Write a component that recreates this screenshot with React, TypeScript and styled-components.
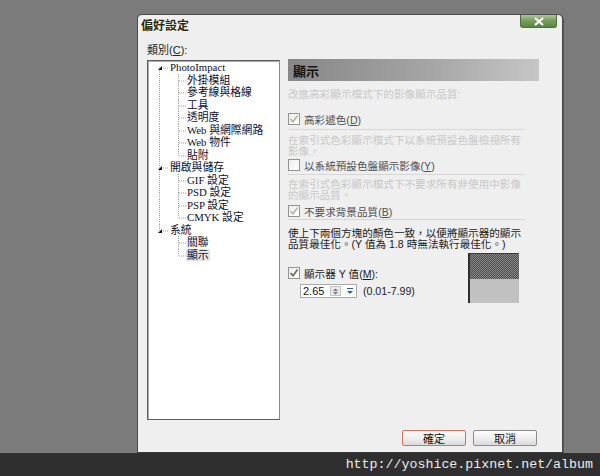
import React from 'react';
import styled, { createGlobalStyle } from 'styled-components';

const GlobalStyle = createGlobalStyle`
  html, body {
    margin: 0;
    padding: 0;
    background: #7b7b7b;
  }
  body {
    font-family: "Liberation Sans", "Noto Sans CJK TC", sans-serif;
  }
`;

const Screen = styled.div`
  width: 600px;
  height: 476px;
  display: flex;
  flex-direction: column;
  background: #7b7b7b;
  overflow: hidden;
`;

const Desktop = styled.div`
  height: 453px;
  box-sizing: border-box;
  padding: 14px 0 0 137px;
  display: flex;
`;

const Dialog = styled.div`
  width: 426px;
  height: 439px;
  box-sizing: border-box;
  border: 1px solid #4c4c4c;
  border-bottom-color: #3a3a3a;
  border-radius: 5px 5px 0 0;
  background: #efefef;
  display: flex;
  flex-direction: column;
  box-shadow: 1px 1px 0 #555;
`;

const TitleBar = styled.div`
  height: 25px;
  display: flex;
  justify-content: space-between;
  align-items: flex-start;
`;

const Title = styled.div`
  padding: 4px 0 0 3px;
  font-size: 12px;
  line-height: 14px;
  font-weight: bold;
  color: #2b2a0e;
  text-shadow: 0 0 2px #fff;
`;

const CloseButton = styled.div`
  width: 37px;
  height: 13px;
  margin-right: 5px;
  box-sizing: border-box;
  border: 1px solid #4d6e3c;
  border-top: none;
  border-radius: 0 0 3px 3px;
  background: linear-gradient(#a9c891, #78a060 45%, #5d8449);
  display: flex;
  align-items: center;
  justify-content: center;
`;

const Content = styled.div`
  display: flex;
  gap: 8px;
  padding-left: 9px;
`;

const LeftColumn = styled.div`
  width: 133px;
  display: flex;
  flex-direction: column;
`;

const FieldLabel = styled.div`
  padding-top: 3px;
  margin-bottom: 2px;
  font-size: 11px;
  line-height: 15px;
  color: #222;
`;

const TreeBox = styled.div`
  height: 360px;
  box-sizing: border-box;
  border: 1px solid #5e5e5e;
  border-right-color: #8a8a8a;
  box-shadow: inset 1px 1px 0 #a8a8a8;
  background: #fff;
  display: flex;
  flex-direction: column;
`;

const TreeRow = styled.div`
  height: 12.5px;
  display: flex;
  align-items: center;
  font-family: "Liberation Serif", "Noto Sans CJK TC", serif;
  font-size: 10.8px;
  line-height: 12.5px;
  color: #0e0e2c;
  white-space: nowrap;
`;

const TreeText = styled.span<{ $selected?: boolean }>`
  padding: 0 1px;
  margin-left: -1px;
  background: ${p => (p.$selected ? '#e4e4e4' : 'transparent')};
`;

const RightPanel = styled.div`
  width: 251px;
  margin-top: 19px;
  display: flex;
  flex-direction: column;
`;

const PanelHeader = styled.div`
  height: 22px;
  box-sizing: border-box;
  padding-left: 5px;
  display: flex;
  align-items: center;
  background: linear-gradient(90deg, #878787, #a4a4a4 55%, #c6c6c6);
  font-size: 13px;
  font-weight: bold;
  color: #111;
`;

const Para = styled.div<{ $disabled?: boolean; $mt: number }>`
  margin-top: ${p => p.$mt}px;
  font-size: 10.6px;
  line-height: 11px;
  color: ${p => (p.$disabled ? '#c8c8c8' : '#1a1a1a')};
  white-space: nowrap;
`;

const CheckRow = styled.div<{ $mt: number; $dim?: boolean }>`
  margin-top: ${p => p.$mt}px;
  height: 14px;
  display: flex;
  align-items: center;
  gap: 4px;
  font-size: 10.6px;
  color: ${p => (p.$dim ? '#505050' : '#1a1a1a')};
  white-space: nowrap;
`;

const Box = styled.div`
  width: 12px;
  height: 12px;
  box-sizing: border-box;
  border: 1px solid #939393;
  background: linear-gradient(135deg, #ececec, #fff);
  display: flex;
  align-items: center;
  justify-content: center;
`;

const Separator = styled.div<{ $mt: number }>`
  margin-top: ${p => p.$mt}px;
  width: 237px;
  height: 1px;
  background: #d6d6d6;
`;

const GammaRow = styled.div`
  margin-top: 3px;
  display: flex;
  justify-content: space-between;
  padding-right: 20px;
`;

const GammaControls = styled.div`
  padding-top: 13px;
  display: flex;
  flex-direction: column;
`;

const SpinLine = styled.div`
  margin-top: 4px;
  margin-left: 12px;
  display: flex;
  align-items: center;
  gap: 6px;
  font-size: 10.6px;
  color: #222;
`;

const SpinBox = styled.div`
  width: 57px;
  height: 14px;
  box-sizing: border-box;
  border: 1px solid #ababab;
  background: #fff;
  display: flex;
  align-items: center;
`;

const SpinValue = styled.span`
  width: 27px;
  padding-left: 2px;
  font-size: 11px;
  color: #111;
`;

const SpinButton = styled.div`
  width: 11px;
  height: 10px;
  box-sizing: border-box;
  border: 1px solid #c4c4c4;
  background: #e8e8e8;
  display: flex;
  align-items: center;
  justify-content: center;
`;

const DropButton = styled.div`
  width: 12px;
  height: 12px;
  margin-left: 3px;
  display: flex;
  align-items: center;
  justify-content: center;
`;

const GammaBox = styled.div`
  width: 51px;
  height: 50px;
  box-sizing: border-box;
  border-left: 2px solid #2e2e2e;
  border-top: 1px solid #3a3a3a;
  display: flex;
  flex-direction: column;
`;

const GammaPattern = styled.div`
  flex: 1;
  background-color: #707070;
  background-image: repeating-conic-gradient(#4a4a4a 0 25%, #8c8c8c 0 50%);
  background-size: 2px 2px;
`;

const GammaSolid = styled.div`
  flex: 1;
  background: #c1c1c1;
`;

const Footer = styled.div`
  margin-top: auto;
  padding: 0 25px 6px 0;
  display: flex;
  justify-content: flex-end;
  gap: 7px;
`;

const Button = styled.div<{ $default?: boolean }>`
  width: 64px;
  height: 16px;
  box-sizing: border-box;
  border: 1px solid ${p => (p.$default ? '#d0725e' : '#8c8c8c')};
  border-radius: 2px;
  background: linear-gradient(#fdfdfd, #ececec 60%, #dadada);
  display: flex;
  align-items: center;
  justify-content: center;
  font-size: 11px;
  color: #111;
`;

const Watermark = styled.div`
  height: 23px;
  background: #2f2f2f;
  display: flex;
  align-items: center;
  justify-content: flex-end;
  padding-right: 7px;
  font-family: "Liberation Mono", monospace;
  font-size: 13.3px;
  color: #ececec;
`;

type Node = { label: string; depth: 0 | 1; selected?: boolean; lastChild?: boolean; rootIndex: number };

const treeData: Node[] = [
  { label: 'PhotoImpact', depth: 0, rootIndex: 0 },
  { label: '外掛模組', depth: 1, rootIndex: 0 },
  { label: '參考線與格線', depth: 1, rootIndex: 0 },
  { label: '工具', depth: 1, rootIndex: 0 },
  { label: '透明度', depth: 1, rootIndex: 0 },
  { label: 'Web 與網際網路', depth: 1, rootIndex: 0 },
  { label: 'Web 物件', depth: 1, rootIndex: 0 },
  { label: '貼附', depth: 1, rootIndex: 0, lastChild: true },
  { label: '開啟與儲存', depth: 0, rootIndex: 1 },
  { label: 'GIF 設定', depth: 1, rootIndex: 1 },
  { label: 'PSD 設定', depth: 1, rootIndex: 1 },
  { label: 'PSP 設定', depth: 1, rootIndex: 1 },
  { label: 'CMYK 設定', depth: 1, rootIndex: 1, lastChild: true },
  { label: '系統', depth: 0, rootIndex: 2 },
  { label: '關聯', depth: 1, rootIndex: 2 },
  { label: '顯示', depth: 1, rootIndex: 2, lastChild: true, selected: true },
];

const LAST_ROOT = 2;
const dot = { stroke: '#9c9c9c', strokeWidth: 1, strokeDasharray: '1 1' };

function Connector({ node }: { node: Node }) {
  const h = 12.5;
  const mid = 6.5;
  if (node.depth === 0) {
    return (
      <svg width="22" height={h} style={{ flexShrink: 0 }}>
        {node.rootIndex > 0 && <line x1="11.5" y1="0" x2="11.5" y2={mid} {...dot} />}
        {node.rootIndex < LAST_ROOT && <line x1="11.5" y1={mid} x2="11.5" y2={h} {...dot} />}
        <line x1="15" y1={mid + 0.5} x2="21" y2={mid + 0.5} {...dot} />
        <polygon points="10,9 14,9 14,5" fill="#111" />
      </svg>
    );
  }
  return (
    <svg width="39" height={h} style={{ flexShrink: 0 }}>
      {node.rootIndex < LAST_ROOT && <line x1="11.5" y1="0" x2="11.5" y2={h} {...dot} />}
      <line x1="30.5" y1="0" x2="30.5" y2={node.lastChild ? mid : h} {...dot} />
      <line x1="31" y1={mid + 0.5} x2="38" y2={mid + 0.5} {...dot} />
    </svg>
  );
}

function CheckBox({ checked, disabled }: { checked?: boolean; disabled?: boolean }) {
  return (
    <Box>
      {checked && (
        <svg width="10" height="10" viewBox="0 0 10 10">
          <path d="M1.5 5 L4 7.8 L8.6 1.6" fill="none" stroke={disabled ? '#b4b4a4' : '#6b6a48'} strokeWidth="1.6" />
        </svg>
      )}
    </Box>
  );
}

export default function App() {
  return (
    <Screen>
      <GlobalStyle />
      <Desktop>
        <Dialog>
          <TitleBar>
            <Title>偏好設定</Title>
            <CloseButton>
              <svg width="12" height="9" viewBox="0 0 12 9">
                <path d="M2 1 L10 8 M10 1 L2 8" stroke="#fff" strokeWidth="2.2" />
              </svg>
            </CloseButton>
          </TitleBar>
          <Content>
            <LeftColumn>
              <FieldLabel>類別(<u>C</u>):</FieldLabel>
              <TreeBox>
                {treeData.map(n => (
                  <TreeRow key={n.label}>
                    <Connector node={n} />
                    <TreeText $selected={n.selected}>{n.label}</TreeText>
                  </TreeRow>
                ))}
              </TreeBox>
            </LeftColumn>
            <RightPanel>
              <PanelHeader>顯示</PanelHeader>
              <Para $disabled $mt={8}>改進高彩顯示模式下的影像顯示品質:</Para>
              <CheckRow $mt={12} $dim>
                <CheckBox checked disabled />
                <span>高彩遞色(<u>D</u>)</span>
              </CheckRow>
              <Separator $mt={3} />
              <Para $disabled $mt={5}>
                在索引式色彩顯示模式下以系統預設色盤檢視所有<br />影像。
              </Para>
              <CheckRow $mt={1} $dim>
                <CheckBox disabled />
                <span>以系統預設色盤顯示影像(<u>Y</u>)</span>
              </CheckRow>
              <Separator $mt={2} />
              <Para $disabled $mt={4}>
                在索引式色彩顯示模式下不要求所有非使用中影像<br />的顯示品質。
              </Para>
              <CheckRow $mt={3} $dim>
                <CheckBox checked disabled />
                <span>不要求背景品質(<u>B</u>)</span>
              </CheckRow>
              <Separator $mt={1} />
              <Para $mt={8}>
                使上下兩個方塊的顏色一致，以便將顯示器的顯示<br />品質最佳化。(Y 值為 1.8 時無法執行最佳化。)
              </Para>
              <GammaRow>
                <GammaControls>
                  <CheckRow $mt={0}>
                    <CheckBox checked />
                    <span>顯示器 Y 值(<u>M</u>):</span>
                  </CheckRow>
                  <SpinLine>
                    <SpinBox>
                      <SpinValue>2.65</SpinValue>
                      <SpinButton>
                        <svg width="5" height="7" viewBox="0 0 5 7">
                          <path d="M0 3 L2.5 0.5 L5 3 Z M0 4 L2.5 6.5 L5 4 Z" fill="#777" />
                        </svg>
                      </SpinButton>
                      <DropButton>
                        <svg width="8" height="8" viewBox="0 0 8 8">
                          <line x1="1" y1="1.5" x2="7" y2="1.5" stroke="#2f5ca8" strokeWidth="1" />
                          <path d="M1 4 L7 4 L4 7 Z" fill="#2f5ca8" />
                        </svg>
                      </DropButton>
                    </SpinBox>
                    <span>(0.01-7.99)</span>
                  </SpinLine>
                </GammaControls>
                <GammaBox>
                  <GammaPattern />
                  <GammaSolid />
                </GammaBox>
              </GammaRow>
            </RightPanel>
          </Content>
          <Footer>
            <Button $default>確定</Button>
            <Button>取消</Button>
          </Footer>
        </Dialog>
      </Desktop>
      <Watermark>http://yoshice.pixnet.net/album</Watermark>
    </Screen>
  );
}
